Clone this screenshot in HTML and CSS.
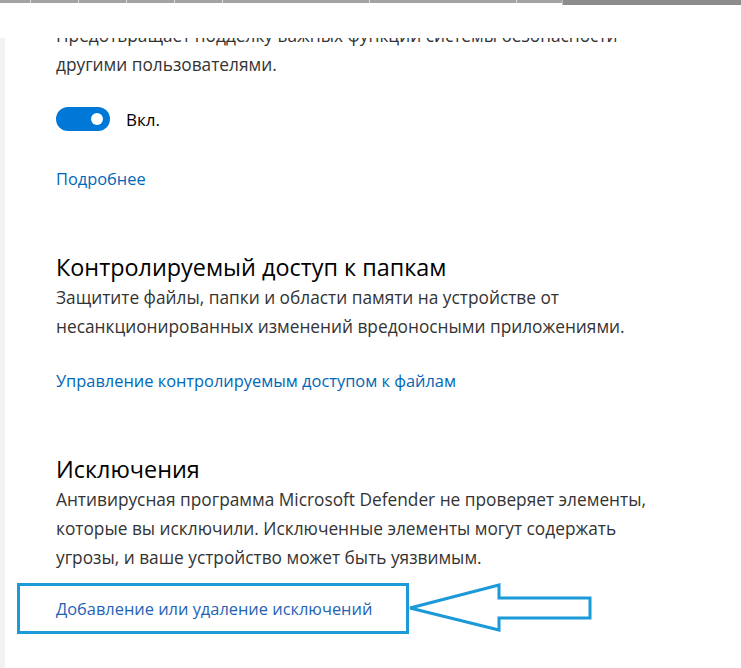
FILE: index.html
```html
<!DOCTYPE html>
<html lang="ru">
<head>
    <meta charset="UTF-8">
    <meta name="viewport" content="width=device-width, initial-scale=1.0">
    <title>Защита от вирусов и угроз</title>
    <link rel="stylesheet" href="styles.css">
</head>
<body>
    <div class="topbar">
        <span class="tab"></span>
        <span class="tab"></span>
        <span class="tab"></span>
        <span class="tab"></span>
        <span class="tab"></span>
        <span class="tab wide"></span>
        <span class="tab wide"></span>
        <span class="tab-fill"></span>
        <span class="tray"></span>
    </div>

    <div class="frame">
        <div class="side"></div>
        <div class="viewport">
            <div class="scroll">
                <p class="text">Предотвращает подделку важных функций системы безопасности<br>другими пользователями.</p>

                <div class="switch-row">
                    <span class="switch"><span class="knob"></span></span>
                    <span class="switch-label">Вкл.</span>
                </div>

                <a class="link more" href="#">Подробнее</a>

                <section class="block">
                    <h2>Контролируемый доступ к папкам</h2>
                    <p class="text">Защитите файлы, папки и области памяти на устройстве от<br>несанкционированных изменений вредоносными приложениями.</p>
                    <a class="link" href="#">Управление контролируемым доступом к файлам</a>
                </section>

                <section class="block">
                    <h2>Исключения</h2>
                    <p class="text">Антивирусная программа Microsoft Defender не проверяет элементы,<br>которые вы исключили. Исключенные элементы могут содержать<br>угрозы, и ваше устройство может быть уязвимым.</p>
                    <div class="callout">
                        <div class="callout-box">
                            <a class="link" href="#">Добавление или удаление исключений</a>
                        </div>
                        <!-- hollow arrow pointing at the box -->
                        <svg class="arrow" width="190" height="56" viewBox="0 0 190 56">
                            <polygon points="4,28 93,5 93,18 184,18 184,38 93,38 93,50" fill="none" stroke="#1b9ad7" stroke-width="3" stroke-linejoin="miter"/>
                        </svg>
                    </div>
                </section>
            </div>
        </div>
    </div>
</body>
</html>
```

FILE: styles.css
```css
body {
    margin: 0;
    background: #fff;
    font-family: "Open Sans", "Noto Sans", Arial, sans-serif;
    overflow: hidden;
}

/* strip of the window above */
.topbar {
    display: flex;
    align-items: flex-start;
    height: 6px;
}
.tab {
    width: 47px;
    height: 3px;
    background: #a3a3a3;
    border-right: 1px solid #dadada;
}
.tab:first-child {
    width: 30px;
}
.tab.wide {
    width: 146px;
}
.tab-fill {
    flex: 1;
    height: 3px;
    background: #a3a3a3;
}
.tray {
    width: 178px;
    height: 5px;
    background: #8c8c8c;
    border-left: 1px solid #bdbdbd;
}

.frame {
    display: flex;
    margin-top: 32px;
    height: 630px;
}
.side {
    width: 5px;
    background: #f2f2f2;
}
.viewport {
    flex: 1;
    overflow: hidden;
    padding-left: 51px;
}
.scroll {
    margin-top: -17px;
}

.text {
    margin: 0;
    font-size: 17.3px;
    line-height: 29px;
    color: #333;
}

.switch-row {
    display: flex;
    align-items: center;
    gap: 16px;
    margin-top: 28px;
    height: 24px;
}
.switch {
    display: flex;
    align-items: center;
    justify-content: flex-end;
    width: 54px;
    height: 24px;
    padding: 0 7px;
    box-sizing: border-box;
    border-radius: 12px;
    background: #0078d7;
}
.knob {
    width: 12px;
    height: 12px;
    border-radius: 50%;
    background: #fff;
}
.switch-label {
    font-size: 17px;
    color: #000;
}

.link {
    display: inline-block;
    font-size: 16.4px;
    line-height: 29px;
    color: #0067b8;
    text-decoration: none;
}
.more {
    margin-top: 33px;
}

.block {
    margin-top: 58px;
}
.block h2 {
    margin: 0;
    font-size: 23.4px;
    font-weight: normal;
    line-height: 32px;
    color: #000;
}
.block .link {
    margin-top: 25px;
}

.callout {
    display: flex;
    align-items: center;
    margin-left: -39px;
    margin-top: 8px;
}
.callout-box {
    display: flex;
    align-items: center;
    height: 51px;
    padding: 0 34px 0 36px;
    box-sizing: border-box;
    border: 3px solid #1b9ad7;
}
.callout-box .link {
    margin-top: 0;
    color: #1f63b4;
}
.arrow {
    margin-left: -3px;
}
```
